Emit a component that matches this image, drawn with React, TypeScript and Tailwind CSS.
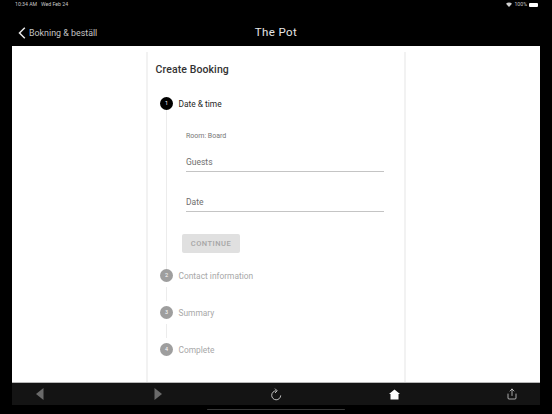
import { Share } from 'lucide-react';

const font = { fontFamily: 'Roboto, sans-serif' };

function StepDot({ n, active }: { n: number; active?: boolean }) {
  return (
    <div className={`flex h-[13px] w-[13px] shrink-0 items-center justify-center rounded-full text-[5.5px] text-white ${active ? 'bg-black' : 'bg-[#9e9e9e]'}`}>
      {n}
    </div>
  );
}

function Step({ n, label, active }: { n: number; label: string; active?: boolean }) {
  return (
    <div className="flex h-[13px] items-center gap-[5.5px]">
      <StepDot n={n} active={active} />
      <span className={`pt-[1px] text-[8.4px] ${active ? 'text-[#1f1f1f]' : 'text-[#a8a8a8]'}`}>{label}</span>
    </div>
  );
}

function Field({ label }: { label: string }) {
  return (
    <div className="h-[22px] w-[198px] border-b border-[#c4c4c4] pt-[6px] text-[8.5px] leading-[13px] text-[#6e6e6e]">
      {label}
    </div>
  );
}

function Connector({ h }: { h: string }) {
  return <div className={`ml-[6px] w-px bg-[#ececec] ${h}`} />;
}

export default function App() {
  return (
    <div className="flex h-[414px] w-[552px] flex-col overflow-hidden bg-black" style={font}>
      <div className="flex h-[9px] items-center justify-between pl-[15px] pr-[14px] pt-[1px] text-[5.2px] text-[#c8c8c8]">
        <span>10:34 AM&nbsp;&nbsp; Wed Feb 24</span>
        <div className="flex items-center gap-[2px]">
          <svg width="6" height="5" viewBox="0 0 12 10" fill="#d0d0d0"><path d="M6 10 0 3.5C3.5 0 8.5 0 12 3.5z" /></svg>
          <span>100%</span>
          <div className="h-[4px] w-[9px] rounded-[1px] bg-white" />
        </div>
      </div>

      <div className="flex h-[37px] items-center pl-[18px] pr-[12px]">
        <div className="flex w-[222px] items-center gap-[3px] pt-[12px]">
          <svg width="8" height="12" viewBox="0 0 8 12" fill="none" stroke="#e8e8e8" strokeWidth="1.5"><path d="M6.8.8 1.5 6l5.3 5.2" /></svg>
          <span className="text-[8.9px] text-[#c4c4c4]">Bokning &amp; beställ</span>
        </div>
        <div className="w-[72px] pt-[10px] text-center text-[11.5px] tracking-[0.4px] text-[#e6e6e6]">The Pot</div>
      </div>

      <div className="mx-3 flex min-h-0 flex-1 justify-center overflow-hidden bg-white">
        <div className="mt-[6px] h-[400px] w-[260px] shrink-0 border-x-2 border-[#f2f2f2] px-[7.5px] pt-[11px]">
          <div className="text-[10.5px] font-medium leading-[13px] tracking-[0.1px] text-[#333333]">Create Booking</div>

          <div className="mt-[21px] pl-[4.5px]">
            <Step n={1} label="Date & time" active />
            <div className="ml-[6px] border-l border-[#ececec] pl-[19px]">
              <div className="pt-[22px] text-[7px] leading-[9px] text-[#777777]">Room: Board</div>
              <div className="mt-[9px] flex flex-col gap-[18px]">
                <Field label="Guests" />
                <Field label="Date" />
              </div>
              <div className="mt-[22px] -ml-[4px] flex h-[19px] w-[58px] items-center justify-center rounded-[2px] bg-[#e0e0e0] text-[7.5px] font-medium tracking-[0.5px] text-[#a6a6a6]">
                CONTINUE
              </div>
              <div className="h-[16px]" />
            </div>
            <Step n={2} label="Contact information" />
            <div className="flex h-[24px] items-center"><Connector h="h-[14px]" /></div>
            <Step n={3} label="Summary" />
            <div className="flex h-[24px] items-center"><Connector h="h-[14px]" /></div>
            <Step n={4} label="Complete" />
          </div>
        </div>
      </div>

      <div className="mx-3 flex h-[23px] items-center justify-between border-t border-[#b8b8b8] bg-[#141414] px-[22px]">
        <div className="flex w-[12px] justify-center">
          <svg width="8" height="12" viewBox="0 0 8 12" fill="#6a6a6a"><path d="M7.5 0v12L0 6z" /></svg>
        </div>
        <div className="flex w-[12px] justify-center">
          <svg width="8" height="12" viewBox="0 0 8 12" fill="#6a6a6a"><path d="M.5 0v12L8 6z" /></svg>
        </div>
        <div className="flex w-[12px] justify-center">
          <svg width="12" height="13" viewBox="0 0 12 13" fill="none" stroke="#d0d0d0" strokeWidth="0.9">
            <path d="M6.2 2.8a4.5 4.5 0 1 0 4.5 4.6" />
            <path d="M5 .6 7.2 2.8 5 5" />
          </svg>
        </div>
        <div className="flex w-[12px] justify-center">
          <svg width="11" height="11" viewBox="0 0 11 11" fill="#ffffff"><path d="M5.5.5 11 5H9.5v5.5h-8V5H0z" /></svg>
        </div>
        <div className="flex w-[12px] justify-center">
          <Share size={14} strokeWidth={1.5} color="#dcdcdc" />
        </div>
      </div>

      <div className="flex h-[9px] items-center justify-center">
        <div className="h-[1.5px] w-[138px] rounded-full bg-[#3a3a3a]" />
      </div>
    </div>
  );
}
